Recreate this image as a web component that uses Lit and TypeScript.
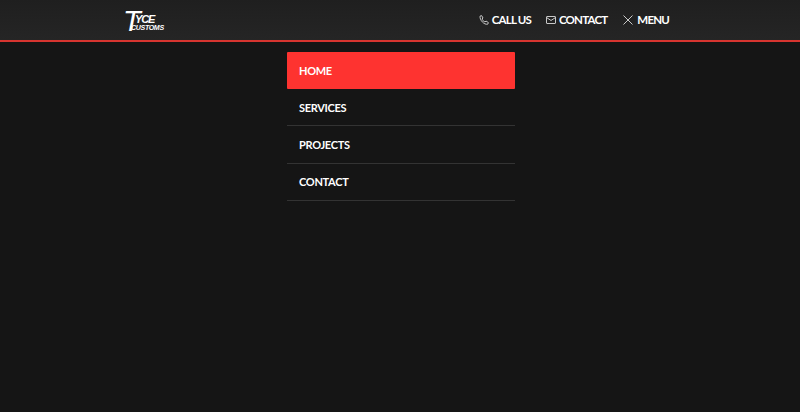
import { LitElement, html, css } from "lit";
import { customElement } from "lit/decorators.js";

@customElement("app-root")
export class AppRoot extends LitElement {
  static styles = css`
    :host {
      display: block;
      width: 800px;
      height: 412px;
      overflow: hidden;
      background: #151515;
      font-family: Lato, sans-serif;
      color: #fff;
    }
    header {
      box-sizing: border-box;
      height: 42px;
      background: linear-gradient(#1f1f1f, #252525);
      border-bottom: 2px solid #d73530;
      display: flex;
      align-items: center;
      justify-content: space-between;
      padding: 0 131px 0 124px;
    }
    .logo {
      position: relative;
      width: 42px;
      height: 22px;
      font-family: "Liberation Sans", sans-serif;
      font-style: italic;
      font-weight: 700;
    }
    .t { position: absolute; left: -1px; top: 1px; font-size: 29px; line-height: 22px; font-weight: 400; }
    .yce { position: absolute; left: 11px; top: 6px; font-size: 11px; line-height: 9px; letter-spacing: -1.2px; }
    .customs { position: absolute; left: 7px; top: 16px; font-size: 7px; line-height: 6px; letter-spacing: -0.3px; }
    nav { display: flex; gap: 15px; align-items: center; margin-top: -1px; }
    .nav-item {
      display: flex;
      align-items: center;
      gap: 3px;
      font-size: 11.5px;
      font-weight: 700;
      letter-spacing: -0.8px;
    }
    .nav-item svg { width: 10px; height: 10px; fill: none; stroke: #c8c8c8; stroke-width: 1; display: block; }
    .menu { margin-left: 1px; gap: 4px; }
    main { display: flex; justify-content: center; padding: 10px 0 0 2px; }
    ul { list-style: none; margin: 0; padding: 0; width: 228px; }
    li {
      box-sizing: border-box;
      height: 37.4px;
      display: flex;
      align-items: center;
      padding-left: 12px;
      font-size: 11px;
      font-weight: 700;
      letter-spacing: -0.3px;
      border-bottom: 1px solid #333;
    }
    li.active {
      background: #fe3330;
      border-bottom: 0;
      height: 37px;
      border-radius: 1px;
    }
  `;

  render() {
    return html`
      <header>
        <div class="logo">
          <span class="t">T</span><span class="yce">YCE</span>
          <span class="customs">CUSTOMS</span>
        </div>
        <nav>
          <div class="nav-item">
            <svg viewBox="0 0 10 10"><path d="M1 1.2 2.6.6 4 3 3 4c.4 1.2 1.5 2.3 3 3l1-1 2.4 1.6-.7 1.6C5 10 .6 5 1 1.2Z"/></svg>
            CALL US
          </div>
          <div class="nav-item">
            <svg viewBox="0 0 10 10"><rect x=".5" y="1.5" width="9" height="7" rx=".5"/><path d="M.5 2.5 5 5.5l4.5-3"/></svg>
            CONTACT
          </div>
          <div class="nav-item menu">
            <svg viewBox="0 0 10 10"><path d="M.5.5l9 9M9.5.5l-9 9"/></svg>
            MENU
          </div>
        </nav>
      </header>
      <main>
        <ul>
          <li class="active">HOME</li>
          <li>SERVICES</li>
          <li>PROJECTS</li>
          <li>CONTACT</li>
        </ul>
      </main>
    `;
  }
}
